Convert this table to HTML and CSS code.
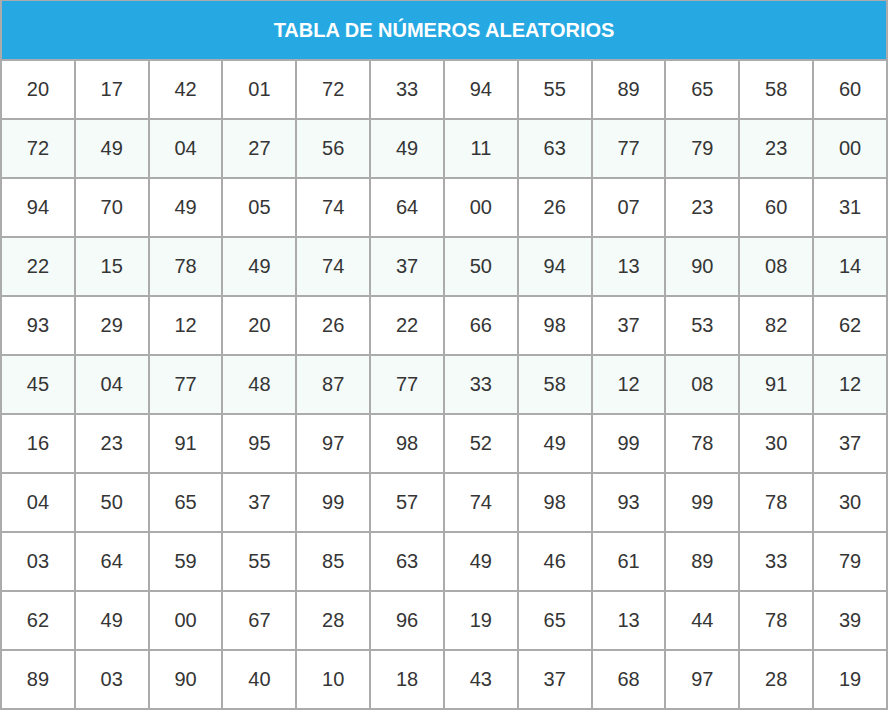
FILE: index.html
```html
<!DOCTYPE html>
<html lang="es">
<head>
<meta charset="utf-8">
<title>Tabla de números aleatorios</title>
<link rel="stylesheet" href="styles.css">
</head>
<body>
<table class="tbl">
  <thead>
    <tr><th colspan="12" class="title">TABLA DE NÚMEROS ALEATORIOS</th></tr>
  </thead>
  <tbody>
    <tr><td>20</td><td>17</td><td>42</td><td>01</td><td>72</td><td>33</td><td>94</td><td>55</td><td>89</td><td>65</td><td>58</td><td>60</td></tr>
    <tr class="tint"><td>72</td><td>49</td><td>04</td><td>27</td><td>56</td><td>49</td><td>11</td><td>63</td><td>77</td><td>79</td><td>23</td><td>00</td></tr>
    <tr><td>94</td><td>70</td><td>49</td><td>05</td><td>74</td><td>64</td><td>00</td><td>26</td><td>07</td><td>23</td><td>60</td><td>31</td></tr>
    <tr class="tint"><td>22</td><td>15</td><td>78</td><td>49</td><td>74</td><td>37</td><td>50</td><td>94</td><td>13</td><td>90</td><td>08</td><td>14</td></tr>
    <tr><td>93</td><td>29</td><td>12</td><td>20</td><td>26</td><td>22</td><td>66</td><td>98</td><td>37</td><td>53</td><td>82</td><td>62</td></tr>
    <tr class="tint"><td>45</td><td>04</td><td>77</td><td>48</td><td>87</td><td>77</td><td>33</td><td>58</td><td>12</td><td>08</td><td>91</td><td>12</td></tr>
    <tr><td>16</td><td>23</td><td>91</td><td>95</td><td>97</td><td>98</td><td>52</td><td>49</td><td>99</td><td>78</td><td>30</td><td>37</td></tr>
    <tr><td>04</td><td>50</td><td>65</td><td>37</td><td>99</td><td>57</td><td>74</td><td>98</td><td>93</td><td>99</td><td>78</td><td>30</td></tr>
    <tr><td>03</td><td>64</td><td>59</td><td>55</td><td>85</td><td>63</td><td>49</td><td>46</td><td>61</td><td>89</td><td>33</td><td>79</td></tr>
    <tr><td>62</td><td>49</td><td>00</td><td>67</td><td>28</td><td>96</td><td>19</td><td>65</td><td>13</td><td>44</td><td>78</td><td>39</td></tr>
    <tr><td>89</td><td>03</td><td>90</td><td>40</td><td>10</td><td>18</td><td>43</td><td>37</td><td>68</td><td>97</td><td>28</td><td>19</td></tr>
  </tbody>
</table>
</body>
</html>
```

FILE: styles.css
```css
html, body {
  margin: 0;
  padding: 0;
  background: #ffffff;
}

.tbl {
  width: 888px;
  table-layout: fixed;
  border-collapse: separate;
  border-spacing: 0;
  border-left: 2px solid #ababab;
  border-top: 1px solid #ababab;
  font-family: "Liberation Sans", Arial, Helvetica, sans-serif;
}

.title {
  height: 58px;
  padding: 0;
  background: #26a9e2;
  color: #ffffff;
  font-size: 20px;
  font-weight: bold;
  text-align: center;
  vertical-align: middle;
  border-right: 2px solid #ababab;
  border-bottom: 2px solid #ababab;
}

.tbl td {
  height: 57px;
  padding: 0;
  text-align: center;
  vertical-align: middle;
  font-size: 20px;
  color: #353535;
  border-right: 2px solid #ababab;
  border-bottom: 2px solid #ababab;
  background: #ffffff;
}

.tbl tr.tint td {
  background: #f4fbf9;
}
```
